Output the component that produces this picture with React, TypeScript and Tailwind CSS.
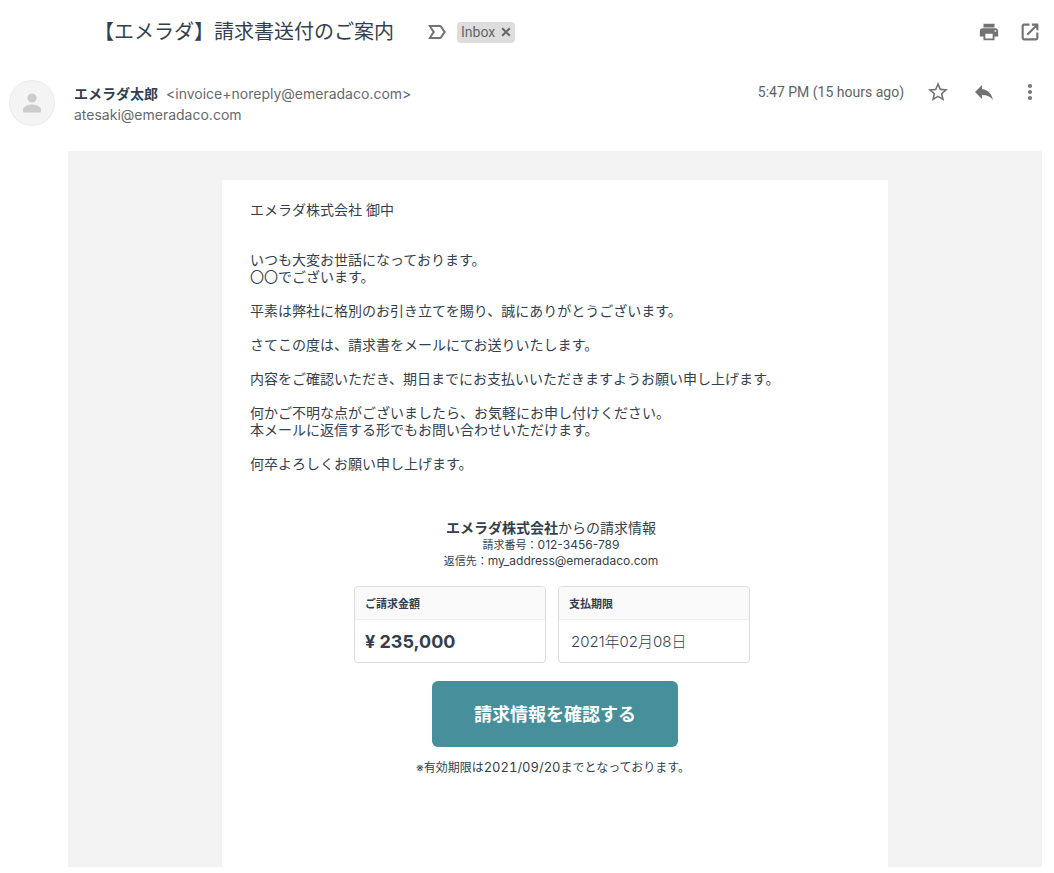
import React from "react";
import {
  MdLabelImportantOutline,
  MdMoreVert,
  MdPrint,
  MdReply,
  MdStarBorder,
} from "react-icons/md";

// each inner array is one paragraph, each string one line
const paragraphs: string[][] = [
  ["いつも大変お世話になっております。", "〇〇でございます。"],
  ["平素は弊社に格別のお引き立てを賜り、誠にありがとうございます。"],
  ["さてこの度は、請求書をメールにてお送りいたします。"],
  ["内容をご確認いただき、期日までにお支払いいただきますようお願い申し上げます。"],
  [
    "何かご不明な点がございましたら、お気軽にお申し付けください。",
    "本メールに返信する形でもお問い合わせいただけます。",
  ],
  ["何卒よろしくお願い申し上げます。"],
];

const Avatar: React.FC = () => (
  <div className="flex size-[46px] shrink-0 items-center justify-center rounded-full border border-[#ebebeb] bg-[#f4f4f4]">
    <svg viewBox="0 0 20 20" className="size-5" fill="#cccccc">
      <circle cx="10" cy="5" r="4.6" />
      <path d="M1 19.5v-2.6c0-3.2 5-5.3 9-5.3s9 2.1 9 5.3v2.6z" />
    </svg>
  </div>
);

const SubjectBar: React.FC = () => (
  <div className="flex items-center justify-between pr-[13px] pl-[94px]">
    <div className="flex items-center">
      <h1 className="text-xl leading-6 text-[#333f50]">
        【エメラダ】請求書送付のご案内
      </h1>
      <button type="button" aria-label="Important" className="ml-[31px]">
        <MdLabelImportantOutline size={24} />
      </button>
      <div className="ml-2 flex h-[21px] items-center gap-[6px] rounded bg-[#dddddd] px-1 font-[Roboto,sans-serif] text-sm text-[#666666]">
        <span>Inbox</span>
        <button type="button" aria-label="Remove label">
          <svg
            viewBox="0 0 10 10"
            className="size-[10px]"
            stroke="currentColor"
            strokeWidth="2"
          >
            <path d="M1.2 1.2l7.6 7.6M8.8 1.2L1.2 8.8" />
          </svg>
        </button>
      </div>
    </div>
    <div className="flex items-center gap-[19px]">
      <button type="button" aria-label="Print">
        <MdPrint size={22} />
      </button>
      <button type="button" aria-label="Open in new window">
        <svg
          viewBox="0 0 24 24"
          className="size-[22px]"
          fill="none"
          stroke="currentColor"
          strokeWidth="2.3"
        >
          <path d="M11.5 4H5.5A1.5 1.5 0 0 0 4 5.5v13A1.5 1.5 0 0 0 5.5 20h13a1.5 1.5 0 0 0 1.5-1.5v-6M14 4h6v6M20 4L9 15" />
        </svg>
      </button>
    </div>
  </div>
);

const SenderRow: React.FC = () => (
  <div className="mt-9 flex items-start pr-3 pl-[9px]">
    <Avatar />
    <div className="mt-[3px] ml-[19px] flex-1 text-sm leading-[21px] text-[#666a6e]">
      <p>
        <span className="mr-2 font-bold text-[#333f50]">エメラダ太郎</span>
        &lt;invoice+noreply@emeradaco.com&gt;
      </p>
      <p>atesaki@emeradaco.com</p>
    </div>
    <div className="flex items-center">
      <span className="font-[Roboto,sans-serif] text-sm text-[#5f6368]">
        5:47 PM (15 hours ago)
      </span>
      <div className="ml-[22px] flex items-center gap-[22px]">
        <button type="button" aria-label="Star">
          <MdStarBorder size={24} />
        </button>
        <button type="button" aria-label="Reply">
          <MdReply size={24} />
        </button>
        <button type="button" aria-label="More">
          <MdMoreVert size={24} />
        </button>
      </div>
    </div>
  </div>
);

const InfoBox: React.FC<{ label: string; children: React.ReactNode }> = ({
  label,
  children,
}) => (
  <div className="w-48 overflow-hidden rounded border border-[#dddddd] text-left">
    <div className="h-[33px] border-b border-[#eeeeee] bg-[#f9f9f9] px-[10px] text-[11px] leading-[34px] font-bold">
      {label}
    </div>
    <div className="flex h-[42px] items-center px-[10px] pt-[2px]">
      {children}
    </div>
  </div>
);

const InvoiceMail: React.FC = () => (
  <div className="mx-auto max-w-[666px] bg-white px-7 pt-[21px] pb-[91px] text-[#333f50]">
    <p className="text-sm leading-[17px]">エメラダ株式会社 御中</p>
    <div className="mt-[33px] flex flex-col gap-[17px] text-sm leading-[17px]">
      {paragraphs.map((lines) => (
        <p key={lines[0]}>
          {lines.map((line) => (
            <span key={line} className="block">
              {line}
            </span>
          ))}
        </p>
      ))}
    </div>

    {/* invoice summary */}
    <div className="mt-[47px] flex flex-col items-center text-center">
      <div className="pr-2">
        <p className="text-sm leading-[17px]">
          <b>エメラダ株式会社</b>からの請求情報
        </p>
        <div className="mt-px text-[11px] leading-4">
          <p>
            請求番号：<span className="text-xs leading-4">012-3456-789</span>
          </p>
          <p>
            返信先：
            <span className="text-xs leading-4">my_address@emeradaco.com</span>
          </p>
        </div>
      </div>
      <div className="mt-[17px] flex gap-3 pr-[6px]">
        <InfoBox label="ご請求金額">
          <span className="text-lg font-bold">¥ 235,000</span>
        </InfoBox>
        <InfoBox label="支払期限">
          <span className="pl-[2px] text-[15px] font-light">
            2021年02月08日
          </span>
        </InfoBox>
      </div>
      <a
        href="#invoice"
        className="mt-[18px] flex h-[66px] w-[246px] items-center justify-center rounded-md bg-[#468f9b] pt-[2px] text-lg font-bold text-white"
      >
        請求情報を確認する
      </a>
      <p className="mt-3 pr-1 text-xs leading-4">
        ※有効期限は
        <span className="text-[13px] leading-4 tabular-nums">2021/09/20</span>
        までとなっております。
      </p>
    </div>
  </div>
);

const App: React.FC = () => {
  return (
    <div className="bg-white pt-5 pb-[6px] font-['Inter','Noto_Sans_CJK_JP',sans-serif] text-[#737373]">
      <SubjectBar />
      <SenderRow />
      <main className="mt-[25px] mr-3 ml-[68px] bg-[#f3f3f3] pt-[29px]">
        <InvoiceMail />
      </main>
    </div>
  );
};

export default App;
